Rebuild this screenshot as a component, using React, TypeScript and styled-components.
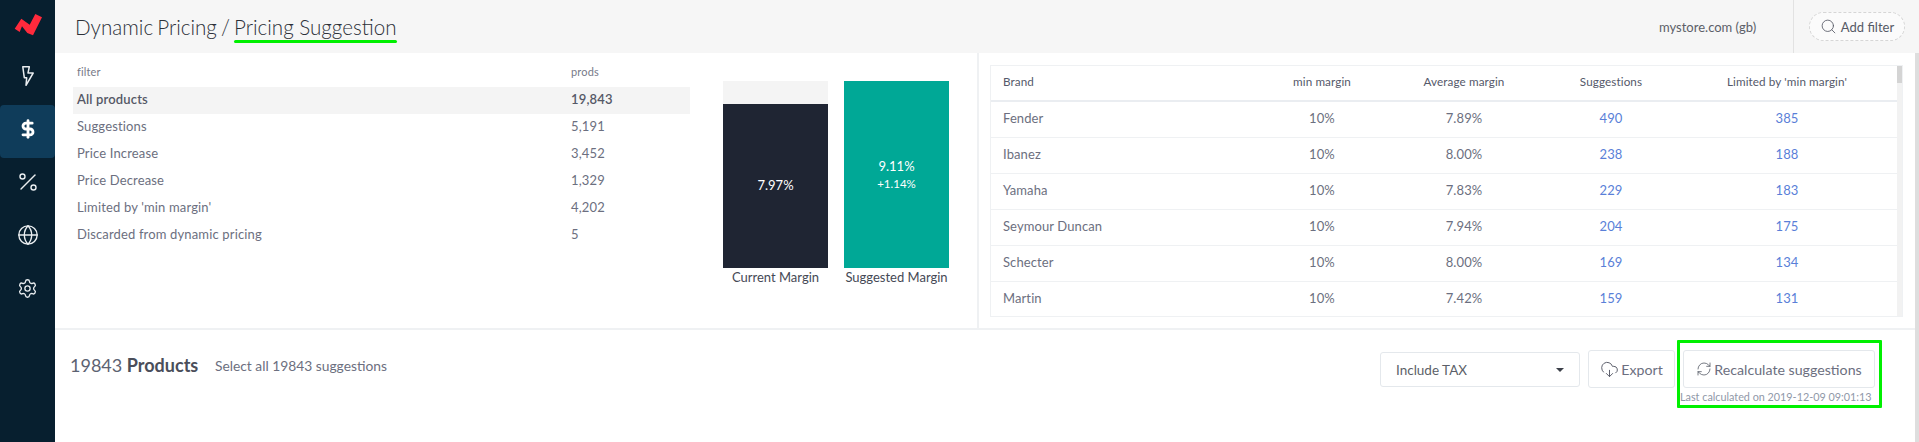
import React from "react";
import styled, { createGlobalStyle } from "styled-components";
import { DollarSign, Percent, Globe, Settings, Search, CloudDownload, RefreshCw } from "lucide-react";

const Global = createGlobalStyle`
  html, body { margin: 0; padding: 0; height: 100%; background: #fff; overflow: hidden; }
  body { font-family: "Lato", "Liberation Sans", sans-serif; color: #6c6f80; }
  * { box-sizing: border-box; }
`;

const Shell = styled.div`
  display: grid;
  grid-template-columns: 55px 1fr;
  width: 1919px;
  height: 442px;
`;

const Sidebar = styled.nav`
  background: #071f2f;
  display: flex;
  flex-direction: column;
  padding-top: 52px;
`;

const LogoBox = styled.div`
  position: absolute;
  top: 14px;
  left: 14px;
  display: flex;
`;

const NavItem = styled.div<{ $active?: boolean }>`
  height: 53px;
  display: flex;
  align-items: center;
  justify-content: center;
  padding-bottom: 5px;
  color: #e9edf0;
  background: ${(p) => (p.$active ? "#0f3c5a" : "transparent")};
  border-radius: ${(p) => (p.$active ? "4px" : "0")};
`;

const Main = styled.div`
  display: flex;
  flex-direction: column;
  min-width: 0;
`;

const Header = styled.header`
  height: 53px;
  background: #f6f6f6;
  display: flex;
  align-items: center;
  padding-left: 20px;
`;

const Title = styled.h1`
  margin: 0;
  font-size: 20.6px;
  font-weight: 300;
  color: #2c3038;
  flex: 1;
  word-spacing: -1.5px;
`;

const Underlined = styled.span`
  position: relative;
  word-spacing: 0;
  &::after {
    content: "";
    position: absolute;
    left: 0;
    right: 0;
    bottom: -4px;
    height: 3px;
    border-radius: 2px;
    background: #00f000;
  }
`;

const Store = styled.div`
  font-size: 13px;
  color: #5c5f68;
  width: 134px;
`;

const FilterCell = styled.div`
  height: 53px;
  width: 126px;
  border-left: 1px solid #e2e2e2;
  display: flex;
  align-items: center;
  padding-left: 15px;
`;

const AddFilter = styled.div`
  width: 96px;
  height: 29px;
  border: 1px dashed #d6d6d6;
  border-radius: 15px;
  background: #fbfbfb;
  display: flex;
  align-items: center;
  justify-content: center;
  gap: 4px;
  font-size: 13px;
  color: #565a66;
`;

const Body = styled.div`
  flex: 1;
  display: flex;
  min-height: 0;
`;

const Content = styled.div`
  flex: 1;
  display: flex;
  flex-direction: column;
  min-width: 0;
`;

const PageTrack = styled.div`
  width: 4px;
  background: #dedede;
`;

const Upper = styled.section`
  height: 277px;
  display: flex;
  border-bottom: 2px solid #eff1f3;
`;

const LeftPanel = styled.div`
  width: 924px;
  display: flex;
  border-right: 2px solid #eff1f3;
  padding: 7px 0 0 18px;
`;

const FilterList = styled.div`
  width: 617px;
`;

const FilterRow = styled.div<{ $active?: boolean }>`
  height: 27px;
  display: grid;
  grid-template-columns: 494px 1fr;
  align-items: center;
  padding: 0 0 4px 4px;
  font-size: 13px;
  letter-spacing: 0.15px;
  color: ${(p) => (p.$active ? "#555866" : "#6c6f80")};
  font-weight: ${(p) => (p.$active ? 600 : 400)};
  background: ${(p) => (p.$active ? "#f4f4f4" : "transparent")};
`;

const FilterHead = styled(FilterRow)`
  font-size: 11px;
  color: #777a88;
`;

const Bars = styled.div`
  display: flex;
  gap: 16px;
  margin-left: 33px;
  padding-top: 21px;
`;

const BarColumn = styled.div`
  width: 105px;
  display: flex;
  flex-direction: column;
  align-items: center;
`;

const BarTrack = styled.div`
  width: 100%;
  height: 187px;
  background: #f4f4f4;
  display: flex;
  flex-direction: column;
  justify-content: flex-end;
`;

const BarFill = styled.div<{ $color: string; $h: number }>`
  height: ${(p) => p.$h}px;
  background: ${(p) => p.$color};
  color: #fff;
  display: flex;
  flex-direction: column;
  align-items: center;
  justify-content: center;
  padding-bottom: 2px;
  font-size: 13px;
`;

const Delta = styled.div`
  font-size: 11.5px;
  margin-top: 3px;
`;

const BarLabel = styled.div`
  font-size: 13px;
  color: #454955;
  margin-top: 1px;
  white-space: nowrap;
`;

const RightPanel = styled.div`
  flex: 1;
  padding: 12px 0 0 11px;
`;

const BrandTable = styled.div`
  width: 913px;
  height: 252px;
  border: 1px solid #eff1f3;
  display: flex;
`;

const Rows = styled.div`
  width: 906px;
`;

const BrandRow = styled.div<{ $head?: boolean }>`
  display: grid;
  grid-template-columns: 270px 122px 162px 132px 220px;
  align-items: center;
  height: 36px;
  padding-bottom: ${(p) => (p.$head ? "5px" : "3px")};
  border-bottom: ${(p) => (p.$head ? "2px solid #eaedf1" : "1px solid #eff1f3")};
  font-size: ${(p) => (p.$head ? "11.7px" : "13px")};
  letter-spacing: 0.1px;
  color: ${(p) => (p.$head ? "#55596a" : "#6c6f80")};
  &:last-child { border-bottom: none; height: 35px; }
`;

const BrandName = styled.div`
  padding-left: 12px;
`;

const Cell = styled.div<{ $link?: boolean }>`
  text-align: center;
  color: ${(p) => (p.$link ? "#5a7fd8" : "inherit")};
`;

const TableTrack = styled.div`
  flex: 1;
  background: #f2f2f2;
`;

const TableThumb = styled.div`
  height: 17px;
  background: #d4d4d4;
`;

const Footer = styled.footer`
  flex: 1;
  display: flex;
  align-items: flex-start;
  padding: 20px 0 0 15px;
`;

const Count = styled.div`
  font-size: 18px;
  color: #5c6272;
  margin-top: 4px;
  width: 145px;
  b { font-weight: 700; color: #4a4e5a; }
`;

const SelectAll = styled.div`
  font-size: 13.8px;
  color: #6c6f80;
  margin-top: 7px;
  flex: 1;
`;

const TaxSelect = styled.div`
  width: 200px;
  height: 35px;
  margin-top: 2px;
  border: 1px solid #e4e8ec;
  border-radius: 3px;
  display: flex;
  align-items: center;
  justify-content: space-between;
  padding: 0 15px 0 15px;
  font-size: 13.5px;
  color: #5c5f68;
`;

const Caret = styled.span`
  width: 0;
  height: 0;
  border-left: 4px solid transparent;
  border-right: 4px solid transparent;
  border-top: 4px solid #3c4049;
`;

const Button = styled.div<{ $w: number }>`
  width: ${(p) => p.$w}px;
  height: 38px;
  border: 1px solid #e4e8ec;
  border-radius: 3px;
  display: flex;
  align-items: center;
  justify-content: center;
  gap: 2px;
  font-size: 14.2px;
  color: #6c6f80;
  svg { color: #565a66; }
`;

const ExportWrap = styled.div`
  margin-left: 8px;
`;

const Recalc = styled.div`
  margin-left: 8px;
  margin-right: 40px;
  width: 192px;
  position: relative;
`;

const LastCalc = styled.div`
  font-size: 10.8px;
  color: #8f98a8;
  white-space: nowrap;
  margin: 2px 0 0 -3px;
`;

const GreenBox = styled.div`
  position: absolute;
  left: -6px;
  top: -10px;
  width: 205px;
  height: 68px;
  border: 3px solid #00f000;
  border-radius: 1px;
  pointer-events: none;
`;

const filters = [
  ["All products", "19,843"],
  ["Suggestions", "5,191"],
  ["Price Increase", "3,452"],
  ["Price Decrease", "1,329"],
  ["Limited by 'min margin'", "4,202"],
  ["Discarded from dynamic pricing", "5"],
];

const brands = [
  ["Fender", "10%", "7.89%", "490", "385"],
  ["Ibanez", "10%", "8.00%", "238", "188"],
  ["Yamaha", "10%", "7.83%", "229", "183"],
  ["Seymour Duncan", "10%", "7.94%", "204", "175"],
  ["Schecter", "10%", "8.00%", "169", "134"],
  ["Martin", "10%", "7.42%", "159", "131"],
];

const Logo = () => (
  <svg width="28" height="22" viewBox="0 0 28 22">
    <path d="M0.7 14.7 L7.3 4.7 L15.7 10.7 L21.3 0 L28 3.3 L19 21.3 L13.3 19 L8 12.3 L5.7 18 Z" fill="#ff2a3c" />
  </svg>
);

const Bolt = () => (
  <svg width="12" height="20" viewBox="0 0 12 20" fill="none" stroke="currentColor" strokeWidth="1.5" strokeLinejoin="round">
    <path d="M0.8 0.8 H7.3 L6 7 H11.2 L4 19.3 L4.7 11.7 H2.3 Z" />
  </svg>
);

export default function App() {
  return (
    <Shell>
      <Global />
      <Sidebar>
        <LogoBox><Logo /></LogoBox>
        <NavItem><Bolt /></NavItem>
        <NavItem $active><DollarSign size={20} strokeWidth={3.4} color="#fff" /></NavItem>
        <NavItem><Percent size={24} strokeWidth={1.4} /></NavItem>
        <NavItem><Globe size={22} strokeWidth={1.5} /></NavItem>
        <NavItem><Settings size={21} strokeWidth={1.5} /></NavItem>
      </Sidebar>
      <Main>
        <Header>
          <Title>Dynamic Pricing / <Underlined>Pricing Suggestion</Underlined></Title>
          <Store>mystore.com (gb)</Store>
          <FilterCell>
            <AddFilter><Search size={17} strokeWidth={1.2} />Add filter</AddFilter>
          </FilterCell>
        </Header>
        <Body>
          <Content>
            <Upper>
              <LeftPanel>
                <FilterList>
                  <FilterHead><span>filter</span><span>prods</span></FilterHead>
                  {filters.map(([name, count], i) => (
                    <FilterRow key={name} $active={i === 0}><span>{name}</span><span>{count}</span></FilterRow>
                  ))}
                </FilterList>
                <Bars>
                  <BarColumn>
                    <BarTrack>
                      <BarFill $color="#1f2533" $h={164}>7.97%</BarFill>
                    </BarTrack>
                    <BarLabel>Current Margin</BarLabel>
                  </BarColumn>
                  <BarColumn>
                    <BarTrack>
                      <BarFill $color="#00a896" $h={187}>9.11%<Delta>+1.14%</Delta></BarFill>
                    </BarTrack>
                    <BarLabel>Suggested Margin</BarLabel>
                  </BarColumn>
                </Bars>
              </LeftPanel>
              <RightPanel>
                <BrandTable>
                  <Rows>
                    <BrandRow $head>
                      <BrandName>Brand</BrandName>
                      <Cell>min margin</Cell>
                      <Cell>Average margin</Cell>
                      <Cell>Suggestions</Cell>
                      <Cell>Limited by 'min margin'</Cell>
                    </BrandRow>
                    {brands.map(([name, min, avg, sug, lim]) => (
                      <BrandRow key={name}>
                        <BrandName>{name}</BrandName>
                        <Cell>{min}</Cell>
                        <Cell>{avg}</Cell>
                        <Cell $link>{sug}</Cell>
                        <Cell $link>{lim}</Cell>
                      </BrandRow>
                    ))}
                  </Rows>
                  <TableTrack><TableThumb /></TableTrack>
                </BrandTable>
              </RightPanel>
            </Upper>
            <Footer>
              <Count>19843 <b>Products</b></Count>
              <SelectAll>Select all 19843 suggestions</SelectAll>
              <TaxSelect>Include TAX<Caret /></TaxSelect>
              <ExportWrap>
                <Button $w={87}><CloudDownload size={19} strokeWidth={1.2} />Export</Button>
              </ExportWrap>
              <Recalc>
                <Button $w={192}><RefreshCw size={16} strokeWidth={1.2} />Recalculate suggestions</Button>
                <LastCalc>Last calculated on 2019-12-09 09:01:13</LastCalc>
                <GreenBox />
              </Recalc>
            </Footer>
          </Content>
          <PageTrack />
        </Body>
      </Main>
    </Shell>
  );
}
